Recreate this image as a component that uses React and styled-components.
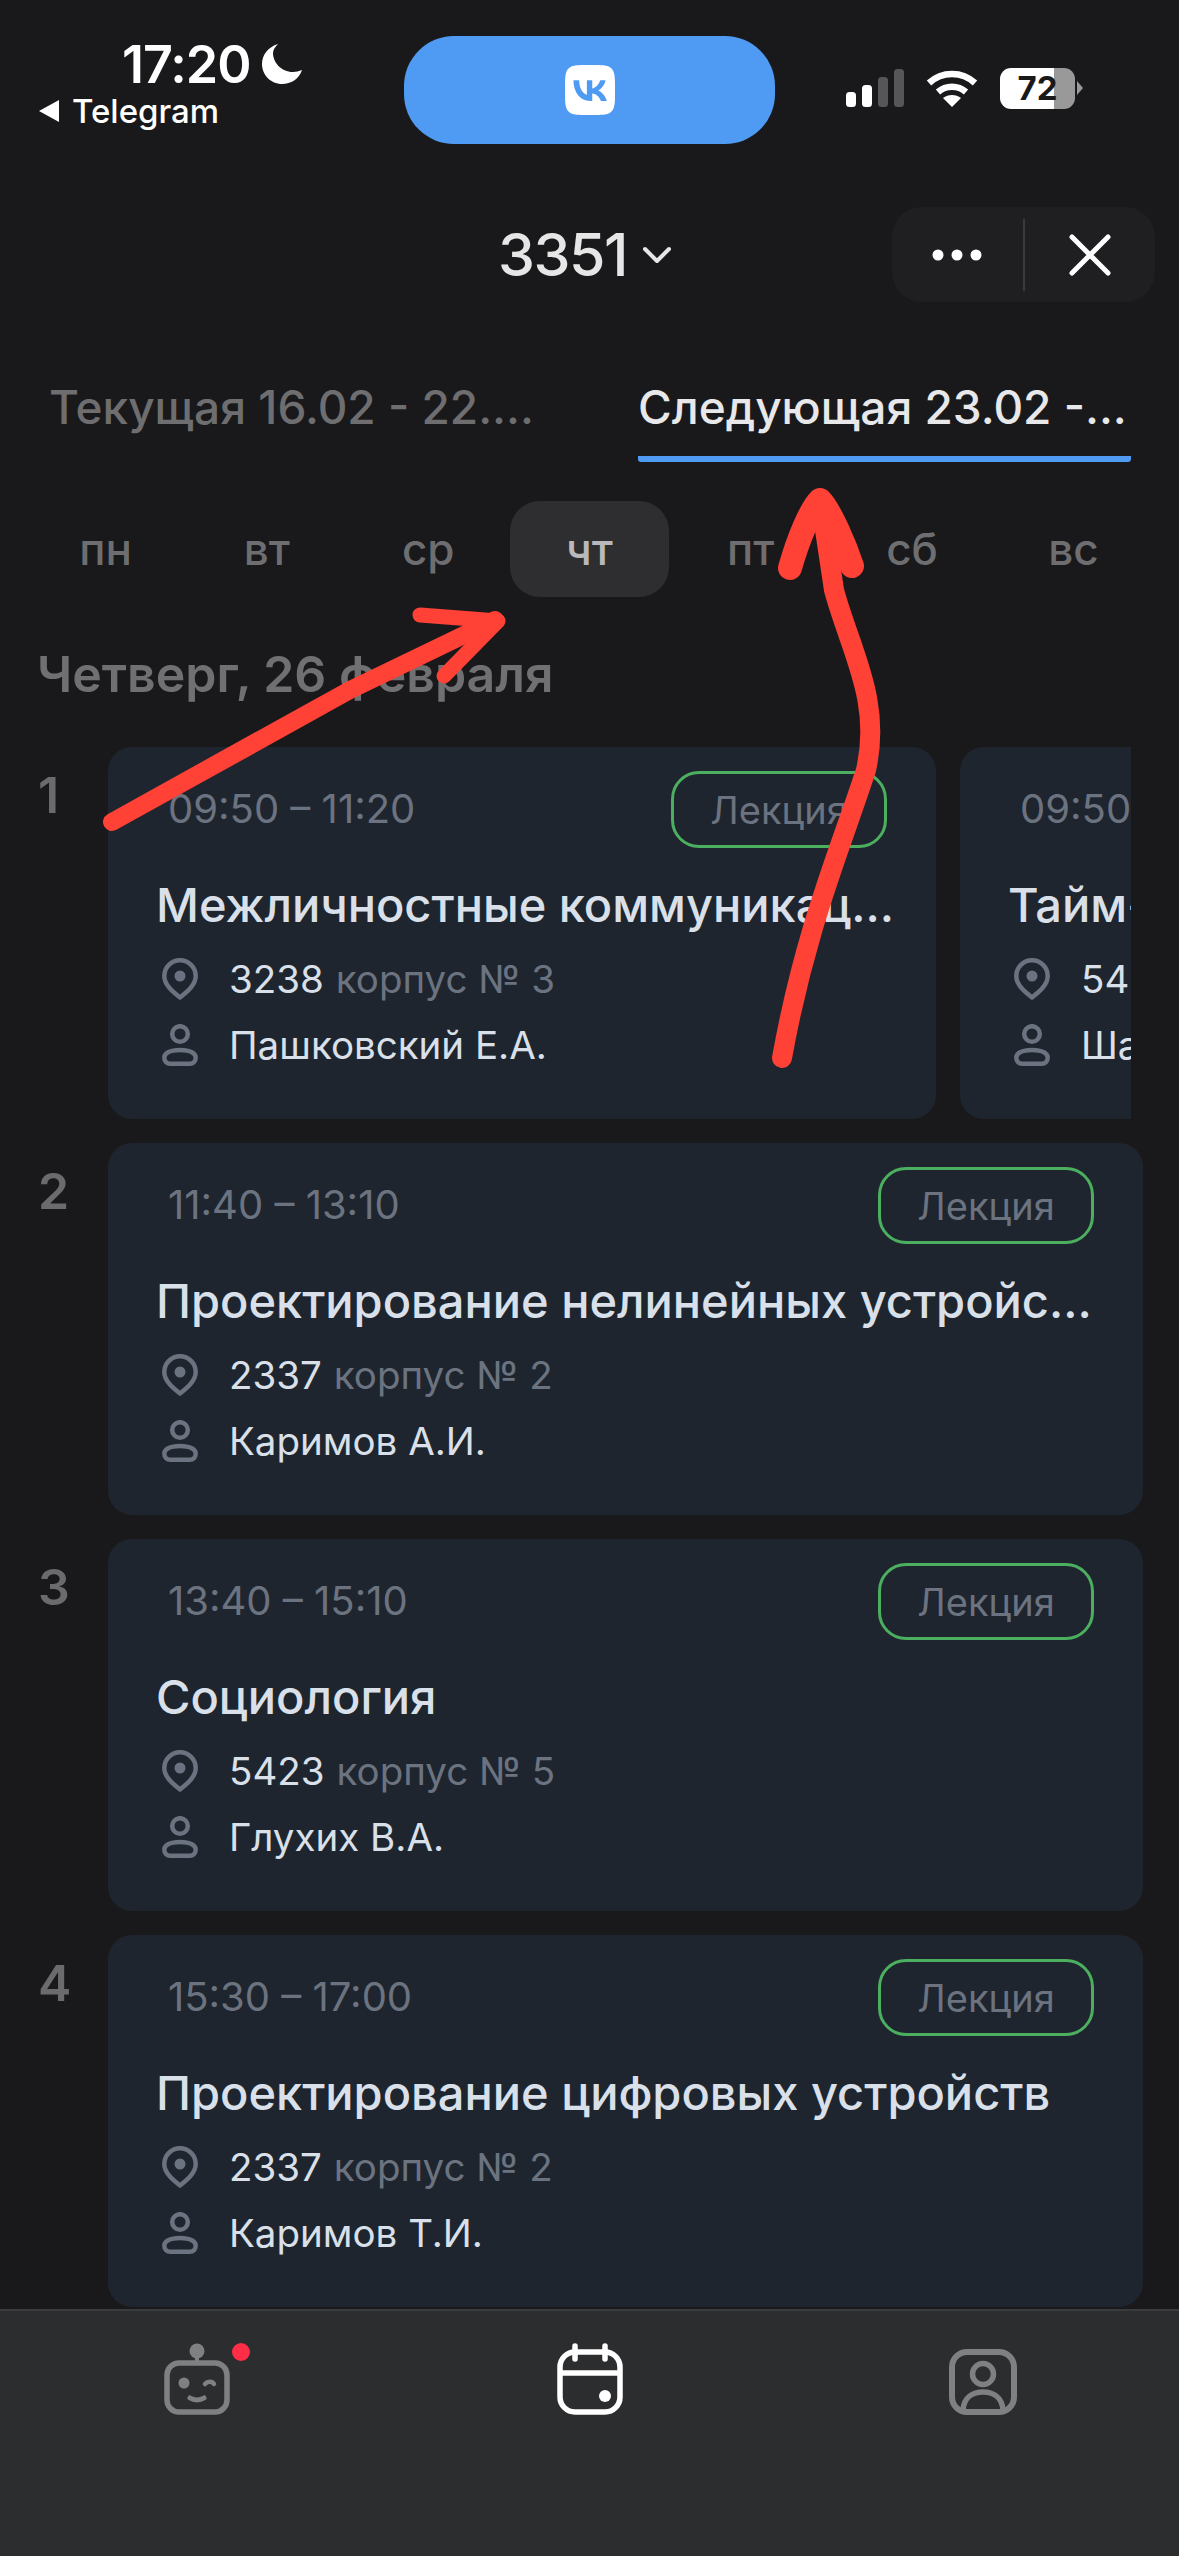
import React from 'react';
import styled, { createGlobalStyle } from 'styled-components';
import { SiVk } from 'react-icons/si';

const GlobalStyle = createGlobalStyle`
  html, body {
    margin: 0;
    padding: 0;
    background: #19191b;
    font-family: Inter, "Noto Sans", sans-serif;
  }
`;

const Page = styled.div`
  position: relative;
  width: 1179px;
  height: 2556px;
  overflow: hidden;
  display: flex;
  flex-direction: column;
  background: #19191b;
`;

const StatusBar = styled.div`
  height: 150px;
  flex: none;
  display: flex;
  box-sizing: border-box;
  padding-top: 36px;
`;

const StatusLeft = styled.div`
  width: 404px;
  box-sizing: border-box;
  padding-left: 38px;
  color: #fff;
`;

const TimeRow = styled.div`
  display: flex;
  align-items: center;
  gap: 11px;
  padding-left: 84px;
  height: 56px;
  font-size: 52px;
  font-weight: 600;
  letter-spacing: -1px;
`;

const BackRow = styled.div`
  display: flex;
  align-items: center;
  gap: 12px;
  font-size: 33px;
  font-weight: 500;
  line-height: 38px;
`;

const Island = styled.div`
  width: 371px;
  height: 108px;
  border-radius: 50px;
  background: #4f9bf4;
  display: flex;
  align-items: center;
  justify-content: center;
  color: #fff;
`;

const StatusRight = styled.div`
  display: flex;
  align-items: center;
  height: 108px;
  padding-left: 71px;
  gap: 22px;
  margin-top: -2px;
`;

const Battery = styled.div`
  position: relative;
  width: 75px;
  height: 41px;
  border-radius: 11px;
  margin-right: 7px;
  background: linear-gradient(90deg, #fff ${(p) => p.$level}%, #999 ${(p) => p.$level}%);
  color: #19191b;
  font-size: 33px;
  font-weight: 700;
  line-height: 41px;
  text-align: center;
  &::after {
    content: '';
    position: absolute;
    right: -8px;
    top: 13px;
    border-left: 6px solid #999;
    border-top: 7px solid transparent;
    border-bottom: 7px solid transparent;
  }
`;

const Header = styled.div`
  position: relative;
  flex: none;
  margin-top: 57px;
  height: 95px;
  display: flex;
  align-items: center;
  justify-content: center;
`;

const GroupTitle = styled.div`
  display: flex;
  align-items: center;
  gap: 15px;
  margin-left: -9px;
  color: #e6e6e6;
  font-size: 59px;
  font-weight: 500;
  letter-spacing: -1.5px;
`;

const MenuPill = styled.div`
  position: absolute;
  right: 24px;
  top: 0;
  width: 263px;
  height: 95px;
  border-radius: 30px;
  background: #1f1f21;
  display: flex;
  align-items: center;
`;

const MenuCell = styled.div`
  flex: 1;
  height: 100%;
  display: flex;
  align-items: center;
  justify-content: center;
`;

const MenuDivider = styled.div`
  width: 2px;
  height: 72px;
  background: #3a3a3c;
`;

const Tabs = styled.div`
  flex: none;
  margin-top: 58px;
  padding: 0 48px 0 49px;
  display: grid;
  grid-template-columns: 493px 493px;
  column-gap: 96px;
`;

const Tab = styled.div`
  height: 102px;
  box-sizing: border-box;
  line-height: 94px;
  font-size: 46px;
  font-weight: 500;
  white-space: nowrap;
  overflow: hidden;
  color: ${(p) => (p.$active ? '#e8e8ea' : '#6e6e70')};
  border-bottom: 6px solid ${(p) => (p.$active ? '#4f9bf4' : 'transparent')};
  border-radius: 0 0 3px 3px;
`;

const Days = styled.div`
  flex: none;
  margin-top: 39px;
  padding: 0 25px;
  display: grid;
  grid-template-columns: repeat(7, 1fr);
`;

const Day = styled.div`
  height: 96px;
  margin: 0 1px;
  border-radius: 30px;
  display: flex;
  align-items: center;
  justify-content: center;
  font-size: 44px;
  font-weight: 500;
  color: ${(p) => (p.$active ? '#b9b9bb' : '#6e6e70')};
  background: ${(p) => (p.$active ? '#2e2e30' : 'transparent')};
`;

const DayHeading = styled.div`
  flex: none;
  margin-top: 47px;
  padding-left: 37px;
  height: 60px;
  line-height: 60px;
  font-size: 50px;
  font-weight: 600;
  color: #707072;
`;

const Schedule = styled.div`
  flex: 1;
  min-height: 0;
  overflow: hidden;
  margin-top: 43px;
  padding: 0 36px 0 38px;
  display: flex;
  flex-direction: column;
  gap: 24px;
`;

const LessonRow = styled.div`
  display: grid;
  grid-template-columns: 70px minmax(0, 1fr);
`;

const LessonNumber = styled.div`
  padding-top: 18px;
  font-size: 50px;
  line-height: 60px;
  font-weight: 600;
  color: #6b6b6d;
`;

const CardRail = styled.div`
  display: flex;
  gap: 24px;
  overflow: hidden;
  margin-right: ${(p) => (p.$scroll ? '12px' : '0')};
`;

const Card = styled.div`
  flex: ${(p) => (p.$narrow ? '0 0 828px' : '1 1 auto')};
  min-width: 0;
  height: 372px;
  box-sizing: border-box;
  padding: 24px 49px 0 49px;
  border-radius: 24px;
  background: #1e252e;
`;

const CardTop = styled.div`
  display: flex;
  align-items: center;
  justify-content: space-between;
  height: 77px;
`;

const Time = styled.div`
  padding-left: 11px;
  font-size: 40px;
  margin-top: -2px;
  color: #6c7380;
`;

const Badge = styled.div`
  width: 216px;
  height: 77px;
  flex: none;
  box-sizing: border-box;
  border: 3px solid #4caf60;
  border-radius: 28px;
  display: flex;
  align-items: center;
  justify-content: center;
  font-size: 38px;
  color: #6c7380;
`;

const Title = styled.div`
  margin: 22px -10px 0 -1px;
  height: 70px;
  line-height: 70px;
  font-size: 47px;
  font-weight: 500;
  color: #d9e0ea;
  white-space: nowrap;
  overflow: hidden;
  text-overflow: ellipsis;
`;

const InfoRows = styled.div`
  margin-top: 6px;
`;

const InfoRow = styled.div`
  display: flex;
  align-items: center;
  gap: 31px;
  height: 66px;
  padding-left: 5px;
  font-size: 38.5px;
  color: #d9e0ea;
  white-space: nowrap;
`;

const Muted = styled.span`
  color: #6c7380;
  margin-left: 12px;
`;

const TabBar = styled.div`
  flex: none;
  height: 247px;
  box-sizing: border-box;
  border-top: 2px solid #3a3b3d;
  background: #2c2d2f;
  display: grid;
  grid-template-columns: repeat(3, 1fr);
  padding: 32px 0 0;
`;

const TabItem = styled.div`
  position: relative;
  display: flex;
  justify-content: center;
  align-items: flex-start;
`;

const NotifyDot = styled.span`
  position: absolute;
  top: 0;
  left: 232px;
  width: 18px;
  height: 18px;
  border-radius: 50%;
  background: #ff2d46;
`;

const Annotations = styled.svg`
  position: absolute;
  left: 0;
  top: 0;
  pointer-events: none;
`;

const Moon = () => (
  <svg width="42" height="42" viewBox="0 0 42 42">
    <path fill="#fff" d="M17 1C7 4 1 12 1 21c0 11 9 20 20 20 9 0 17-5 20-14-3 1-6 2-9 2C20 29 12 19 12 10c0-3 2-6 5-9z" />
  </svg>
);

const BackArrow = () => (
  <svg width="22" height="24" viewBox="0 0 22 24">
    <path fill="#fff" d="M21 1v22L1 12z" />
  </svg>
);

const Signal = () => (
  <svg width="58" height="38" viewBox="0 0 58 38">
    <rect x="0" y="23" width="10" height="15" rx="3.5" fill="#fff" />
    <rect x="16" y="16" width="10" height="22" rx="3.5" fill="#fff" />
    <rect x="32" y="8" width="10" height="30" rx="3.5" fill="#565658" />
    <rect x="48" y="0" width="10" height="38" rx="3.5" fill="#565658" />
  </svg>
);

const Wifi = () => (
  <svg width="52" height="38" viewBox="0 0 52 38" fill="none">
    <path d="M3 14C16 2 36 2 49 14" stroke="#fff" strokeWidth="6.5" />
    <path d="M12 23c8-7 20-7 28 0" stroke="#fff" strokeWidth="6.5" />
    <path fill="#fff" d="M26 38 L17 29c5-4 13-4 18 0z" />
  </svg>
);

const Chevron = () => (
  <svg width="30" height="18" viewBox="0 0 30 18" fill="none">
    <path d="M3 3l12 12L27 3" stroke="#e6e6e6" strokeWidth="4" strokeLinecap="round" strokeLinejoin="round" />
  </svg>
);

const Dots = () => (
  <svg width="50" height="12" viewBox="0 0 50 12" fill="#fff">
    <circle cx="6" cy="6" r="5.5" />
    <circle cx="25" cy="6" r="5.5" />
    <circle cx="44" cy="6" r="5.5" />
  </svg>
);

const Close = () => (
  <svg width="42" height="42" viewBox="0 0 42 42" fill="none">
    <path d="M3 3l36 36M39 3L3 39" stroke="#fff" strokeWidth="5" strokeLinecap="round" />
  </svg>
);

const PinIcon = () => (
  <svg width="36" height="42" viewBox="0 0 36 42" fill="none" style={{ flex: 'none' }}>
    <path d="M18 39.500C11 34 2.300 27 2.300 18a15.700 15.700 0 0 1 31.400 0c0 9-8.700 16-15.700 21.500z" stroke="#6c7380" strokeWidth="4.500" strokeLinejoin="round" />
    <circle cx="18" cy="18" r="5.500" fill="#6c7380" />
  </svg>
);

const PersonIcon = () => (
  <svg width="36" height="42" viewBox="0 0 36 42" fill="none" style={{ flex: 'none' }}>
    <circle cx="18" cy="10" r="7.800" stroke="#6c7380" strokeWidth="4.500" />
    <path d="M2.300 33.500c0-4 5-7.500 15.700-7.500s15.700 3.500 15.700 7.500c0 4-2.500 6.200-6 6.200H8.300c-3.500 0-6-2.200-6-6.200z" stroke="#6c7380" strokeWidth="4.500" />
  </svg>
);

const BotIcon = () => (
  <svg width="66" height="72" viewBox="0 0 66 72" fill="none">
    <circle cx="33" cy="8" r="7.500" fill="#7f8082" />
    <rect x="31" y="12" width="4" height="8" fill="#7f8082" />
    <rect x="3" y="20" width="60" height="49" rx="12" stroke="#7f8082" strokeWidth="5.500" />
    <circle cx="20" cy="40" r="5.500" fill="#7f8082" />
    <path d="M41 41c2.500-3 7-3 9 0" stroke="#7f8082" strokeWidth="4.500" strokeLinecap="round" />
    <path d="M26 55c4 2.500 10 2.500 14 0" stroke="#7f8082" strokeWidth="5" strokeLinecap="round" />
  </svg>
);

const CalendarIcon = () => (
  <svg width="66" height="72" viewBox="0 0 66 72" fill="none">
    <rect x="3" y="9" width="60" height="60" rx="15" stroke="#fff" strokeWidth="5.500" />
    <path d="M3 30h60" stroke="#fff" strokeWidth="5.500" />
    <path d="M18 3v13M48 3v13" stroke="#fff" strokeWidth="5.500" strokeLinecap="round" />
    <circle cx="48" cy="53" r="6" fill="#fff" />
  </svg>
);

const ProfileIcon = () => (
  <svg width="68" height="72" viewBox="0 0 68 72" fill="none">
    <rect x="3" y="9" width="62" height="60" rx="15" stroke="#7f8082" strokeWidth="6" />
    <circle cx="34" cy="31" r="10.500" stroke="#7f8082" strokeWidth="5.500" />
    <path d="M14 67c1-13 10-18 20-18s19 5 20 18" stroke="#7f8082" strokeWidth="5.500" />
  </svg>
);

const LESSONS = [
  {
    num: 1,
    scroll: true,
    cards: [
      { time: '09:50 – 11:20', title: 'Межличностные коммуникации', room: '3238', building: 'корпус № 3', teacher: 'Пашковский Е.А.' },
      { time: '09:50 – 11:20', title: 'Тайм-менеджмент', room: '5423', building: 'корпус № 5', teacher: 'Шаров С.В.' },
    ],
  },
  { num: 2, cards: [{ time: '11:40 – 13:10', title: 'Проектирование нелинейных устройств связи', room: '2337', building: 'корпус № 2', teacher: 'Каримов А.И.' }] },
  { num: 3, cards: [{ time: '13:40 – 15:10', title: 'Социология', room: '5423', building: 'корпус № 5', teacher: 'Глухих В.А.' }] },
  { num: 4, cards: [{ time: '15:30 – 17:00', title: 'Проектирование цифровых устройств', room: '2337', building: 'корпус № 2', teacher: 'Каримов Т.И.' }] },
];

const DAYS = ['пн', 'вт', 'ср', 'чт', 'пт', 'сб', 'вс'];

const LessonCard = ({ lesson, narrow }) => (
  <Card $narrow={narrow}>
    <CardTop>
      <Time>{lesson.time}</Time>
      <Badge>Лекция</Badge>
    </CardTop>
    <Title>{lesson.title}</Title>
    <InfoRows>
      <InfoRow>
        <PinIcon />
        <span>
          {lesson.room}
          <Muted>{lesson.building}</Muted>
        </span>
      </InfoRow>
      <InfoRow>
        <PersonIcon />
        <span>{lesson.teacher}</span>
      </InfoRow>
    </InfoRows>
  </Card>
);

export default function App() {
  return (
    <Page>
      <GlobalStyle />
      <StatusBar>
        <StatusLeft>
          <TimeRow>
            17:20
            <Moon />
          </TimeRow>
          <BackRow>
            <BackArrow />
            Telegram
          </BackRow>
        </StatusLeft>
        <Island>
          <SiVk size={50} />
        </Island>
        <StatusRight>
          <Signal />
          <Wifi />
          <Battery $level={72}>72</Battery>
        </StatusRight>
      </StatusBar>

      <Header>
        <GroupTitle>
          3351
          <Chevron />
        </GroupTitle>
        <MenuPill>
          <MenuCell>
            <Dots />
          </MenuCell>
          <MenuDivider />
          <MenuCell>
            <Close />
          </MenuCell>
        </MenuPill>
      </Header>

      <Tabs>
        <Tab>Текущая 16.02 - 22....</Tab>
        <Tab $active>Следующая 23.02 -...</Tab>
      </Tabs>

      <Days>
        {DAYS.map((d) => (
          <Day key={d} $active={d === 'чт'}>
            {d}
          </Day>
        ))}
      </Days>

      <DayHeading>Четверг, 26 февраля</DayHeading>

      <Schedule>
        {LESSONS.map((row) => (
          <LessonRow key={row.num}>
            <LessonNumber>{row.num}</LessonNumber>
            <CardRail $scroll={row.scroll}>
              {row.cards.map((c) => (
                <LessonCard key={c.title} lesson={c} narrow={row.scroll} />
              ))}
            </CardRail>
          </LessonRow>
        ))}
      </Schedule>

      <TabBar>
        <TabItem>
          <BotIcon />
          <NotifyDot />
        </TabItem>
        <TabItem>
          <CalendarIcon />
        </TabItem>
        <TabItem>
          <ProfileIcon />
        </TabItem>
      </TabBar>

      {/* red marker arrows drawn on top of the screenshot */}
      <Annotations width="1179" height="2556" viewBox="0 0 1179 2556" fill="none">
        <path d="M112 822L350 690L495 620" stroke="#ff4136" strokeWidth="18" strokeLinecap="round" strokeLinejoin="round" />
        <path d="M420 615L498 621L444 676" stroke="#ff4136" strokeWidth="15" strokeLinecap="round" strokeLinejoin="round" />
        <path d="M782 1058C805 930 840 850 866 770C882 700 850 650 834 590L822 510" stroke="#ff4136" strokeWidth="20" strokeLinecap="round" strokeLinejoin="round" />
        <path d="M790 568C798 540 810 510 820 500C830 510 845 545 852 566" stroke="#ff4136" strokeWidth="24" strokeLinecap="round" strokeLinejoin="round" />
      </Annotations>
    </Page>
  );
}
